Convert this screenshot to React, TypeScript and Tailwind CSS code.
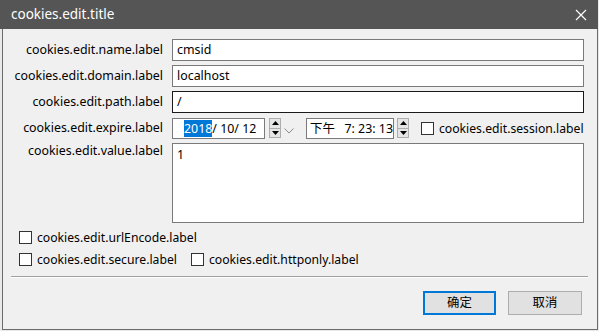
import React from "react";

const font = { fontFamily: '"Noto Sans", "Noto Sans CJK SC", sans-serif' };

function Spinner() {
  return (
    <div className="flex flex-col w-[12px] h-[20px] border border-[#adadad] bg-[#f0f0f0]">
      <div className="flex-1 flex items-center justify-center border-b border-[#adadad] bg-[#e5e5e5]">
        <svg width="7" height="4" viewBox="0 0 7 4">
          <path d="M0 4 L3.5 0 L7 4 Z" fill="#000" />
        </svg>
      </div>
      <div className="flex-1 flex items-center justify-center bg-[#e5e5e5]">
        <svg width="7" height="4" viewBox="0 0 7 4">
          <path d="M0 0 L3.5 4 L7 0 Z" fill="#000" />
        </svg>
      </div>
    </div>
  );
}

function Check({ label }: { label: string }) {
  return (
    <label className="flex items-center gap-[5px] text-[12.2px] leading-[17px] text-black">
      <span className="w-[13px] h-[13px] border border-[#333] bg-white shrink-0" />
      <span className="whitespace-nowrap">{label}</span>
    </label>
  );
}

function Row({ label, children, top }: { label: string; children: React.ReactNode; top?: boolean }) {
  return (
    <div className={`flex gap-[9px] ${top ? "items-start" : "items-center"}`}>
      <div className={`w-[160px] text-right text-[12.4px] text-black leading-[22px] shrink-0 ${top ? "-mt-[3px]" : ""}`}>
        {label}
      </div>
      <div className="flex-1 flex items-center">{children}</div>
    </div>
  );
}

export default function App() {
  return (
    <div className="w-[599px] h-[331px] bg-[#e9e9e9] overflow-hidden" style={font}>
      <div className="w-[598px] h-[330px] flex flex-col">
        <div className="h-[29px] bg-[#555555] flex items-center justify-between pl-[11px] pr-[11px]">
          <span className="text-white text-[13.5px]">cookies.edit.title</span>
          <svg width="12" height="12" viewBox="0 0 12 12">
            <path d="M1 1 L11 11 M11 1 L1 11" stroke="#fff" strokeWidth="1.2" />
          </svg>
        </div>
        <div className="flex-1 ml-[2px] border-l border-r border-b border-[#6b6b6b] bg-[#f0f0f0] flex flex-col pt-[10px] pr-[13px]">
          <div className="flex flex-col gap-[4px]">
            <Row label="cookies.edit.name.label">
              <div className="w-full h-[22px] border border-[#7a7a7a] bg-white px-[4px] text-[12.4px] leading-[20px]">cmsid</div>
            </Row>
            <Row label="cookies.edit.domain.label">
              <div className="w-full h-[22px] border border-[#7a7a7a] bg-white px-[4px] text-[12.4px] leading-[20px]">localhost</div>
            </Row>
            <Row label="cookies.edit.path.label">
              <div className="w-full h-[22px] border border-[#1a1a1a] bg-white px-[4px] text-[12.4px] leading-[20px]">/</div>
            </Row>
            <Row label="cookies.edit.expire.label">
              <div className="flex items-center w-full h-[22px]">
                <div className="w-[93px] h-[21px] border border-[#7a7a7a] bg-white text-[12.4px] leading-[19px] pl-[11px] whitespace-nowrap">
                  <span className="bg-[#0078d7] text-white">2018</span>/ 10/ 12
                </div>
                <div className="ml-[4px]">
                  <Spinner />
                </div>
                <svg className="ml-[3px] mt-[6px]" width="10" height="6" viewBox="0 0 10 6">
                  <path d="M0.5 0.5 L5 5 L9.5 0.5" stroke="#8a8a8a" strokeWidth="1" fill="none" />
                </svg>
                <div className="ml-[12px] w-[88px] h-[21px] border border-[#7a7a7a] bg-white text-[12.4px] leading-[19px] pl-[3px] whitespace-nowrap overflow-hidden">
                  下午&nbsp;&nbsp;&nbsp;7: 23: 13
                </div>
                <div className="ml-[3px]">
                  <Spinner />
                </div>
                <div className="ml-[12px]">
                  <Check label="cookies.edit.session.label" />
                </div>
              </div>
            </Row>
            <Row label="cookies.edit.value.label" top>
              <div className="w-full h-[80px] border border-[#7a7a7a] bg-white px-[4px] pt-[2px] text-[12.4px] leading-[18px]">1</div>
            </Row>
          </div>
          <div className="pl-[16px] mt-[6px] flex flex-col gap-[5px]">
            <Check label="cookies.edit.urlEncode.label" />
            <div className="flex gap-[14px]">
              <Check label="cookies.edit.secure.label" />
              <Check label="cookies.edit.httponly.label" />
            </div>
          </div>
          <div className="ml-[8px] -mr-[4px] mt-[8px] h-[2px] border-t border-[#a0a0a0] border-b border-b-white" />
          <div className="flex justify-end gap-[12px] mt-[13px]">
            <button className="w-[73px] h-[24px] border-2 border-[#0078d7] bg-[#e1e1e1] text-[12.4px] text-black">确定</button>
            <button className="w-[74px] h-[24px] border border-[#adadad] bg-[#e1e1e1] text-[12.4px] text-black mr-[2px]">取消</button>
          </div>
        </div>
      </div>
    </div>
  );
}
